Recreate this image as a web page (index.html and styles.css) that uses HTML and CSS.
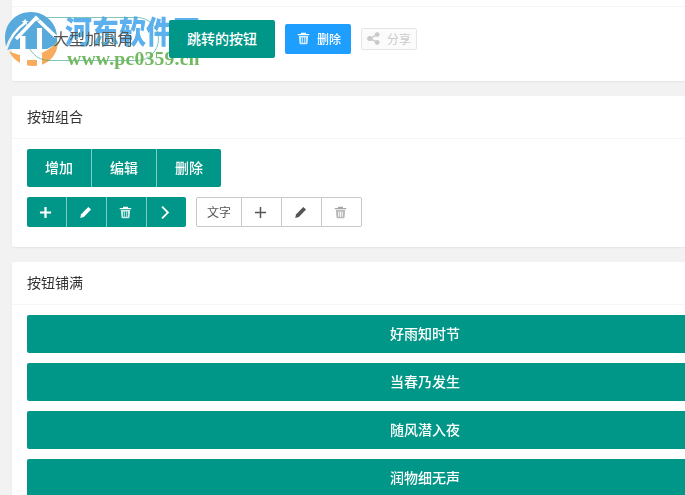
FILE: index.html
```html
<!DOCTYPE html>
<html lang="zh-CN">
<head>
<meta charset="utf-8">
<title>按钮</title>
<link rel="stylesheet" href="styles.css">
</head>
<body>
<svg class="sprites" width="0" height="0" aria-hidden="true">
  <symbol id="trash" viewBox="0 0 14 14">
    <path d="M.8 2.200h12.400v1.400H.8zM4.300.8h5.400v1.400H4.300z"/>
    <path d="M2 4.200h10l-.7 8.200c0 .5-.4.8-.9.8H3.600c-.5 0-.9-.3-.9-.8zM4.600 5.800v5.800h1V5.800zm1.900 0v5.800h1V5.800zm1.900 0v5.800h1V5.800z" fill-rule="evenodd" opacity=".8"/>
  </symbol>
  <symbol id="pen" viewBox="0 0 14 14">
    <path d="M10 1l3 2.800-7.800 8-3.900 1.200 1-4z"/>
  </symbol>
  <symbol id="plus" viewBox="0 0 14 14">
    <path d="M5.800 1h2.400v4.800H13v2.400H8.200V13H5.800V8.200H1V5.800h4.800z"/>
  </symbol>
  <symbol id="plus-thin" viewBox="0 0 14 14">
    <path d="M6.200 1h1.600v5.200H13v1.600H7.800V13H6.200V7.800H1V6.200h5.200z"/>
  </symbol>
  <symbol id="next" viewBox="0 0 14 14">
    <path d="M4 0l7 7-7 7-1.400-1.400L8.200 7 2.600 1.400z"/>
  </symbol>
  <symbol id="share" viewBox="0 0 14 14">
    <circle cx="11" cy="2.800" r="2.600"/><circle cx="11" cy="11.200" r="2.600"/><circle cx="3" cy="7" r="2.800"/>
    <path d="M3 6.200l7.600-4 .7 1.300L3.700 7.500zM3.700 6.500l7.600 4-.7 1.300L3 7.800z"/>
  </symbol>
</svg>

<main class="page">
  <section class="card">
    <div class="card-header card-header-stub"></div>
    <div class="card-body btn-row">
      <button class="btn btn-lg btn-outline-round">大型加圆角</button>
      <button class="btn btn-teal btn-front">跳转的按钮</button>
      <button class="btn btn-sm btn-blue"><svg class="ico ico-sm"><use href="#trash"/></svg>删除</button>
      <button class="btn btn-xs btn-disabled"><svg class="ico ico-sm"><use href="#share"/></svg>分享</button>
    </div>
  </section>

  <section class="card">
    <div class="card-header">按钮组合</div>
    <div class="card-body stack">
      <div class="group">
        <button class="btn btn-teal">增加</button>
        <button class="btn btn-teal">编辑</button>
        <button class="btn btn-teal">删除</button>
      </div>
      <div class="btn-row">
        <div class="group">
          <button class="btn btn-sm btn-teal btn-icon"><svg class="ico"><use href="#plus"/></svg></button>
          <button class="btn btn-sm btn-teal btn-icon"><svg class="ico"><use href="#pen"/></svg></button>
          <button class="btn btn-sm btn-teal btn-icon"><svg class="ico"><use href="#trash"/></svg></button>
          <button class="btn btn-sm btn-teal btn-icon"><svg class="ico"><use href="#next"/></svg></button>
        </div>
        <div class="group group-outline">
          <button class="btn btn-sm btn-plain">文字</button>
          <button class="btn btn-sm btn-plain btn-icon"><svg class="ico"><use href="#plus-thin"/></svg></button>
          <button class="btn btn-sm btn-plain btn-icon"><svg class="ico"><use href="#pen"/></svg></button>
          <button class="btn btn-sm btn-plain btn-icon btn-muted"><svg class="ico"><use href="#trash"/></svg></button>
        </div>
      </div>
    </div>
  </section>

  <section class="card">
    <div class="card-header">按钮铺满</div>
    <div class="card-body stack">
      <button class="btn btn-teal btn-fluid">好雨知时节</button>
      <button class="btn btn-teal btn-fluid">当春乃发生</button>
      <button class="btn btn-teal btn-fluid">随风潜入夜</button>
      <button class="btn btn-teal btn-fluid">润物细无声</button>
    </div>
  </section>
</main>

<div class="watermark">
  <svg class="wm-logo" viewBox="0 0 58 56" width="58" height="56" aria-hidden="true">
    <defs>
      <mask id="wm-cut">
        <rect width="58" height="56" fill="#fff"/>
        <path d="M1 38Q6 21 20 11" fill="none" stroke="#000" stroke-width="2.500"/>
        <path d="M11 27L31 6l20 19" fill="none" stroke="#000" stroke-width="3.500"/>
        <path d="M15 24h5.500v22H15zM32 16h5v30h-5zM20 41h12v7H20z" fill="#000"/>
        <path d="M15 44h7v12h-7zM32 44h5v12h-5z" fill="#000"/>
      </mask>
    </defs>
    <g mask="url(#wm-cut)">
      <path d="M0 26C0 11 11 0 26 0c14 0 26 11 26 25v7l-10 5H6l-4 1C.7 34 0 30 0 26z" fill="#58a9dc"/>
      <path d="M4 39c16 9 36 5 49-10 0 14-10 25-24 25C17 54 8 48 4 39z" fill="#f8ab5c"/>
    </g>
    <path d="M20 6.500l1 2.300 2.500.2-1.900 1.600.6 2.400-2.200-1.300-2.100 1.300.6-2.400-1.900-1.600 2.500-.2z" fill="#fff"/>
  </svg>
  <div class="wm-text">
    <div class="wm-title">河东软件园</div>
    <div class="wm-url">www.pc0359.cn</div>
  </div>
</div>
</body>
</html>
```

FILE: styles.css
```css
* { box-sizing: border-box; }

html, body {
  margin: 0;
  height: 100%;
  overflow: hidden;
}

body {
  background: #f2f2f2;
  font-family: "Noto Sans CJK SC", "Liberation Sans", sans-serif;
  font-size: 14px;
  color: #333;
  position: relative;
}

.sprites { position: absolute; }

.page {
  width: 850px;
  padding-left: 12px;
  display: flex;
  flex-direction: column;
  gap: 15px;
}

.card {
  width: 826px;
  background: #fff;
  border-radius: 2px;
  box-shadow: 0 1px 2px rgba(0, 0, 0, .06);
}

.card-header {
  height: 43px;
  padding: 0 15px;
  line-height: 40px;
  font-size: 14px;
  color: #333;
  border-bottom: 1px solid #f6f6f6;
}

.card-header-stub { height: 7px; }

.card-body { padding: 10px 15px 20px; }

.btn-row {
  display: flex;
  align-items: center;
  gap: 10px;
}

.stack {
  display: flex;
  flex-direction: column;
  align-items: flex-start;
  gap: 10px;
}

.btn {
  display: inline-flex;
  align-items: center;
  justify-content: center;
  height: 38px;
  padding: 0 18px 2px;
  border: 0;
  border-radius: 2px;
  font-family: inherit;
  font-size: 14px;
  font-weight: 500;
  line-height: 1;
  white-space: nowrap;
  color: #fff;
}

.btn-teal { background: #009688; }
.btn-blue { background: #1e9fff; }

.btn-front {
  position: relative;
  z-index: 1;
}

.btn-lg {
  height: 44px;
  padding: 0 25px 2px;
  font-size: 16px;
}

.btn-sm {
  height: 30px;
  padding: 0 10px 1px;
  font-size: 12px;
}

.btn-xs {
  height: 22px;
  padding: 0 5px 1px;
  font-size: 12px;
}

.btn-outline-round {
  border: 1px solid #7fc4bd;
  border-radius: 22px;
  background: #fff;
  color: #555;
  font-weight: 400;
}

.btn-disabled {
  border: 1px solid #e6e6e6;
  background: #fbfbfb;
  color: #c9c9c9;
  font-weight: 400;
}

.btn-blue .ico-sm { margin: 0 7px 0 2px; }
.btn-disabled .ico-sm { margin-right: 7px; }

.ico {
  width: 13px;
  height: 13px;
  fill: currentColor;
  flex: none;
}

.ico-sm {
  width: 13px;
  height: 13px;
}

.group { display: flex; }

.group .btn { border-radius: 0; width: 65px; padding: 0 0 2px; }
.group .btn + .btn { border-left: 1px solid rgba(255, 255, 255, .5); }
.group .btn:first-child { border-radius: 2px 0 0 2px; width: 64px; }
.group .btn:last-child { border-radius: 0 2px 2px 0; }

.group .btn-icon { width: 40px; padding: 0 2px 0 0; }
.group .btn-icon:first-child { width: 39px; }

.group-outline {
  border: 1px solid #c9c9c9;
  border-radius: 2px;
  height: 30px;
}

.group .btn.btn-plain {
  height: 28px;
  background: #fff;
  color: #555;
  font-weight: 400;
  border-left: 1px solid #c9c9c9;
}

.group .btn.btn-plain:first-child {
  width: 44px;
  border-left: 0;
  padding-bottom: 0;
}

.group .btn.btn-muted { color: #a6a6a6; }

.btn-fluid {
  width: 100%;
  flex: none;
}

.watermark {
  position: absolute;
  left: 5px;
  top: 12px;
  display: flex;
  gap: 2px;
  pointer-events: none;
  mix-blend-mode: darken;
}

.wm-logo { flex: none; }

.wm-title {
  font-family: "Noto Sans CJK SC", sans-serif;
  font-weight: 900;
  font-size: 27px;
  line-height: 36px;
  color: #5cb0ee;
  transform: scaleY(1.12);
  transform-origin: 50% 40%;
}

.wm-url {
  padding-left: 2px;
  font-family: "Liberation Serif", serif;
  font-weight: 700;
  font-size: 19.700px;
  line-height: 20px;
  letter-spacing: .2px;
  color: #72b860;
  white-space: nowrap;
}
```
